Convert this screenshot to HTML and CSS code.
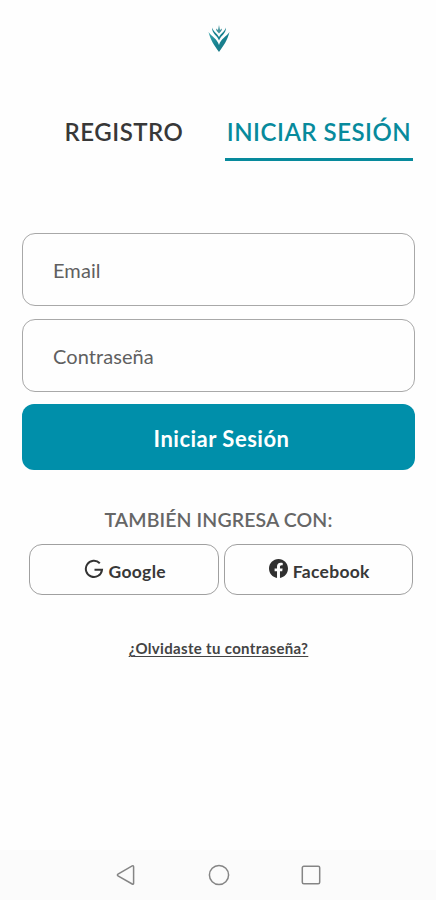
FILE: index.html
```html
<!DOCTYPE html>
<html lang="es">
<head>
<meta charset="utf-8">
<title>Iniciar Sesión</title>
<link rel="stylesheet" href="styles.css">
</head>
<body>
<main class="screen">
  <header class="brand">
    <svg width="22" height="29" viewBox="0 0 22 29">
      <defs><linearGradient id="leaf" x1="0" y1="0" x2="1" y2="1"><stop offset="0" stop-color="#3ba6ae"/><stop offset=".5" stop-color="#16818f"/><stop offset="1" stop-color="#237985"/></linearGradient></defs>
      <path d="M.5 8C4 13 9 14.500 11 21C13 14.500 18 13 21.500 8C19.500 16 16 21 11 28C6 21 2.500 16 .5 8Z" fill="url(#leaf)"/>
      <path d="M4 3.500C5.500 8 9 9 11 13C13 9 16.500 8 18 3.500C18 10 13 11 11 16.500C9 11 4 10 4 3.500Z" fill="#16818f"/>
      <path d="M8 4.500L10 6L11 1L12 6L14 4.500C14 7 12 8 11 9.500C10 8 8 7 8 4.500Z" fill="#42949d"/>
    </svg>
  </header>
  <nav class="tabs">
    <a class="tab"><span class="t-reg">REGISTRO</span></a>
    <a class="tab active"><span class="t-ini">INICIAR SESIÓN</span></a>
  </nav>
  <form class="form">
    <div class="field"><span class="t-email">Email</span></div>
    <div class="field"><span class="t-pass">Contraseña</span></div>
    <button type="button" class="submit"><span class="t-submit">Iniciar Sesión</span></button>
  </form>
  <p class="also"><span class="t-also">TAMBIÉN INGRESA CON:</span></p>
  <div class="social">
    <button type="button" class="provider">
      <svg width="20" height="20" viewBox="0 0 20 20"><path d="M15.800 4.300A8.100 8.100 0 1 0 18 10.800H10.500" fill="none" stroke="#333" stroke-width="2"/></svg>
      <span class="t-google">Google</span>
    </button>
    <button type="button" class="provider">
      <svg width="19" height="19" viewBox="0 0 24 24"><path fill="#303030" d="M24 12.070C24 5.400 18.630 0 12 0S0 5.400 0 12.070C0 18.100 4.390 23.100 10.130 24v-8.440H7.080v-3.490h3.050V9.410c0-3.020 1.790-4.690 4.530-4.690 1.310 0 2.680.24 2.680.24v2.970h-1.510c-1.490 0-1.960.93-1.960 1.890v2.250h3.330l-.53 3.490h-2.800V24C19.610 23.100 24 18.100 24 12.070z"/></svg>
      <span class="t-face">Facebook</span>
    </button>
  </div>
  <p class="forgot"><a class="t-forgot">¿Olvidaste tu contraseña?</a></p>
  <footer class="navbar">
    <svg width="20" height="22" viewBox="0 0 20 22"><path d="M16.200 1.900Q17.600 1.200 17.600 2.800V19.200Q17.600 20.800 16.200 20L2 12Q.8 11 2 10Z"/></svg>
    <svg width="22" height="22" viewBox="0 0 22 22"><circle cx="11" cy="11" r="9.600"/></svg>
    <svg width="20" height="22" viewBox="0 0 20 22"><rect x="1.300" y="2.300" width="17.400" height="17.400" rx="1.500"/></svg>
  </footer>
</main>
</body>
</html>
```
FILE: styles.css
```css
* { box-sizing: border-box; }
body { margin: 0; background: #fefefe; font-family: Lato, "Liberation Sans", sans-serif; color: #383838; }
p { margin: 0; }
.screen { height: 900px; display: flex; flex-direction: column; overflow: hidden; }
span, a { white-space: nowrap; }
.brand { height: 105px; padding: 24px 0 0 1px; display: flex; justify-content: center; flex: none; }
.tabs { display: flex; height: 56px; padding: 0 23px 0 24px; justify-content: space-between; flex: none; }
.tab { width: 200px; display: flex; justify-content: center; padding-top: 12px; line-height: 30px; font-size: 24px; font-weight: 600; letter-spacing: .5px; }
.tab.active { width: 188px; color: #078a9c; border-bottom: 3px solid #078a9c; }
.form { margin-top: 72px; padding: 0 21px 0 22px; display: flex; flex-direction: column; gap: 12px; flex: none; }
.field { height: 73px; border: 1.5px solid #a8a8a8; border-radius: 13px; padding-left: 30px; display: flex; align-items: center; font-size: 20px; color: #606060; letter-spacing: .08px; padding-top: 1px; }
.field + .field { margin-top: 1px; padding-top: 0; }
.submit { height: 66px; border: 0; border-radius: 12px; background: #008faa; color: #fff; font: 700 22px Lato, sans-serif; padding: 2px 0 0 6px; letter-spacing: .5px; }
.also { margin-top: 37px; padding-left: 1px; height: 26px; line-height: 26px; text-align: center; font-size: 19.500px; font-weight: 600; color: #666; letter-spacing: .1px; flex: none; }
.social { margin-top: 11px; padding: 0 23px 0 29px; display: flex; gap: 5px; flex: none; }
.provider { flex: 1; height: 51px; border: 1.200px solid #a0a0a0; border-radius: 13px; background: #fefefe; display: flex; align-items: center; justify-content: center; gap: 5px; padding: 0 0 0 2px; font: 700 17.500px Lato, sans-serif; color: #383838; letter-spacing: .3px; }
.provider svg { flex: none; margin-top: -2px; }
.provider span { padding-top: 3px; }
.forgot { margin-top: 42px; padding-left: 1px; height: 22px; line-height: 22px; text-align: center; font-size: 15px; font-weight: 700; color: #444; letter-spacing: .33px; flex: none; }
.forgot a { text-decoration: underline; text-decoration-thickness: 1px; text-underline-offset: 2px; }
.navbar { margin-top: auto; height: 50px; background: #fbfbfb; display: flex; justify-content: space-between; align-items: center; padding: 0 115px 0 116px; flex: none; }
.navbar svg { fill: none; stroke: #858585; stroke-width: 1.500; }
```
